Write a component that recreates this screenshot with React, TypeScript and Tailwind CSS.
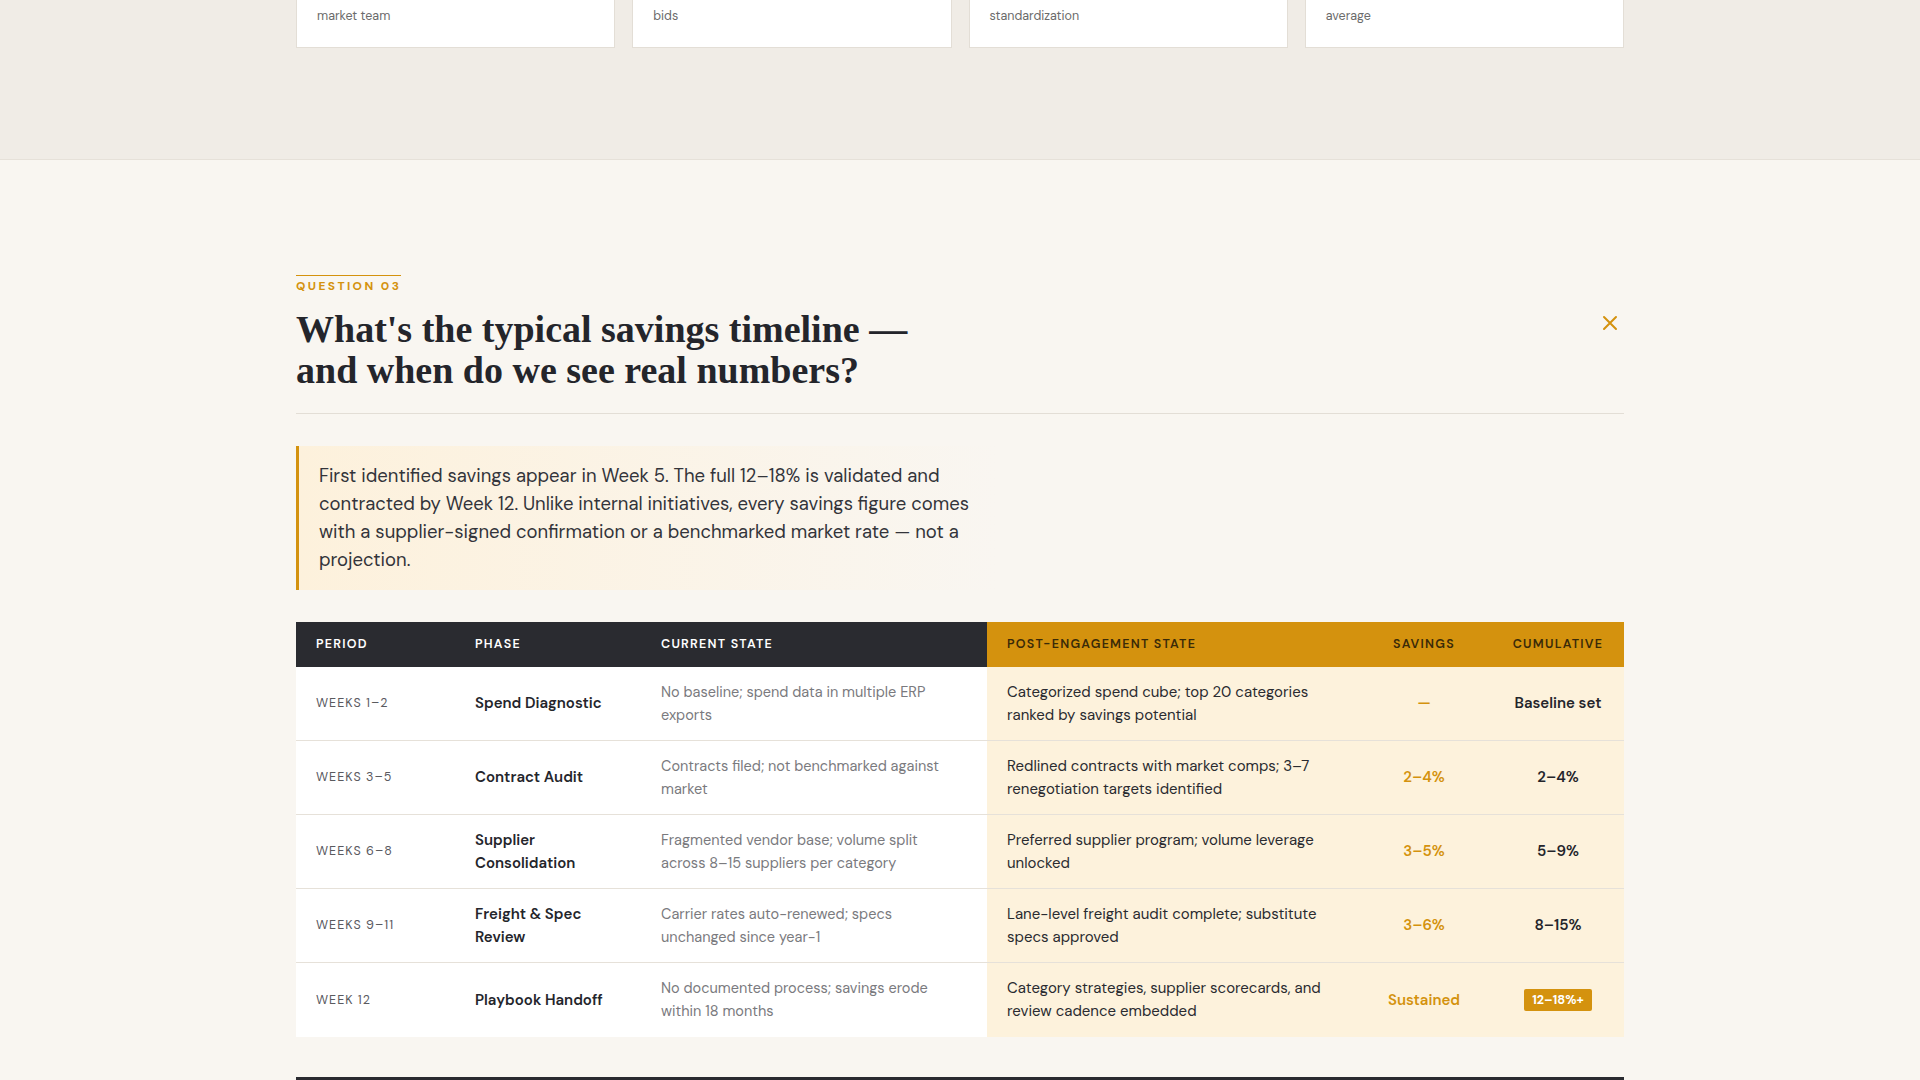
import React from "react";

const rows = [
  ["WEEKS 1–2", "Spend Diagnostic", "No baseline; spend data in multiple ERP exports", "Categorized spend cube; top 20 categories ranked by savings potential", "—", "Baseline set"],
  ["WEEKS 3–5", "Contract Audit", "Contracts filed; not benchmarked against market", "Redlined contracts with market comps; 3–7 renegotiation targets identified", "2–4%", "2–4%"],
  ["WEEKS 6–8", "Supplier Consolidation", "Fragmented vendor base; volume split across 8–15 suppliers per category", "Preferred supplier program; volume leverage unlocked", "3–5%", "5–9%"],
  ["WEEKS 9–11", "Freight & Spec Review", "Carrier rates auto-renewed; specs unchanged since year-1", "Lane-level freight audit complete; substitute specs approved", "3–6%", "8–15%"],
  ["WEEK 12", "Playbook Handoff", "No documented process; savings erode within 18 months", "Category strategies, supplier scorecards, and review cadence embedded", "Sustained", "12–18%+"],
];

const sans = { fontFamily: "'DM Sans', Inter, 'Noto Sans', sans-serif" };

export default function App() {
  return (
    <div className="w-[1920px] h-[1080px] overflow-hidden bg-[#f9f6f1] text-[#2a2b30]" style={sans}>
      <div className="bg-[#f0ece6] h-[160px] border-b border-[#e6e1d9]">
        <div className="w-[1328px] mx-auto grid grid-cols-4 gap-[17px]">
          {["market team", "bids", "standardization", "average"].map((t) => (
            <div key={t} className="bg-white border border-[#e3ded6] border-t-0 h-[48px] px-[20px] pt-[7px] text-[12.5px] text-[#6b6b6b]">{t}</div>
          ))}
        </div>
      </div>
      <div className="w-[1328px] mx-auto pt-[113px]">
        <div className="flex justify-between items-start">
          <div>
            <div className="inline-block border-t border-[#d4920e] pt-[1px] text-[12px] font-bold tracking-[0.2em] text-[#d4920e]">QUESTION 03</div>
            <h2 className="mt-[12px] text-[38px] leading-[41px] font-bold text-[#24252b]" style={{ fontFamily: "'Liberation Serif', serif" }}>
              What's the typical savings timeline —<br />and when do we see real numbers?
            </h2>
          </div>
          <svg className="mt-[42px] mr-[6px]" width="16" height="16" viewBox="0 0 16 16" stroke="#d4920e" strokeWidth="2" strokeLinecap="round"><path d="M2 2l12 12M14 2L2 14" /></svg>
        </div>
        <div className="mt-[22px] border-t border-[#e3ded6]" />
        <div className="mt-[32px] w-[700px] border-l-[3px] border-[#d4920e] bg-gradient-to-r from-[#fdf1dc] to-[#f9f6f1] pl-[20px] pr-[10px] py-[16px] text-[18.5px] leading-[28px] text-[#33343a]">
          First identified savings appear in Week 5. The full 12–18% is validated and contracted by Week 12. Unlike internal initiatives, every savings figure comes with a supplier-signed confirmation or a benchmarked market rate — not a projection.
        </div>
        <div className="mt-[32px]">
          <div className="grid grid-cols-[159px_186px_346px_369px_136px_132px] h-[45px] items-center text-[12.5px] font-semibold tracking-[0.1em]">
            <div className="bg-[#2a2b30] text-white h-full flex items-center pl-[20px]">PERIOD</div>
            <div className="bg-[#2a2b30] text-white h-full flex items-center pl-[20px]">PHASE</div>
            <div className="bg-[#2a2b30] text-white h-full flex items-center pl-[20px]">CURRENT STATE</div>
            <div className="bg-[#d4920e] text-[#3a2a08] h-full flex items-center pl-[20px]">POST-ENGAGEMENT STATE</div>
            <div className="bg-[#d4920e] text-[#3a2a08] h-full flex items-center justify-center">SAVINGS</div>
            <div className="bg-[#d4920e] text-[#3a2a08] h-full flex items-center justify-center">CUMULATIVE</div>
          </div>
          {rows.map((r, i) => (
            <div key={i} className={`grid grid-cols-[159px_186px_346px_369px_136px_132px] h-[74px] ${i < 4 ? "border-b border-[#e6e1d9]" : ""}`}>
              <div className="bg-white flex items-center pl-[20px] text-[12.5px] tracking-[0.08em] text-[#5a5a5f]">{r[0]}</div>
              <div className="bg-white flex items-center pl-[20px] pr-[30px] text-[15px] leading-[23px] font-semibold text-[#24252b]">{r[1]}</div>
              <div className="bg-white flex items-center pl-[20px] pr-[24px] text-[14.5px] leading-[23px] text-[#7a7a7e]">{r[2]}</div>
              <div className="bg-[#fdf2dc] flex items-center pl-[20px] pr-[20px] text-[15px] leading-[23px] text-[#2a2b30]">{r[3]}</div>
              <div className="bg-[#fdf2dc] flex items-center justify-center text-[15px] font-semibold text-[#d4920e]">{r[4]}</div>
              <div className="bg-[#fdf2dc] flex items-center justify-center text-[15px] font-semibold text-[#24252b]">
                {i === 4 ? <span className="bg-[#d4920e] text-white text-[12.5px] font-bold px-[8px] py-[2px] rounded-[2px]">{r[5]}</span> : r[5]}
              </div>
            </div>
          ))}
        </div>
        <div className="mt-[40px] border-t-[3px] border-[#2a2b30]" />
      </div>
    </div>
  );
}
